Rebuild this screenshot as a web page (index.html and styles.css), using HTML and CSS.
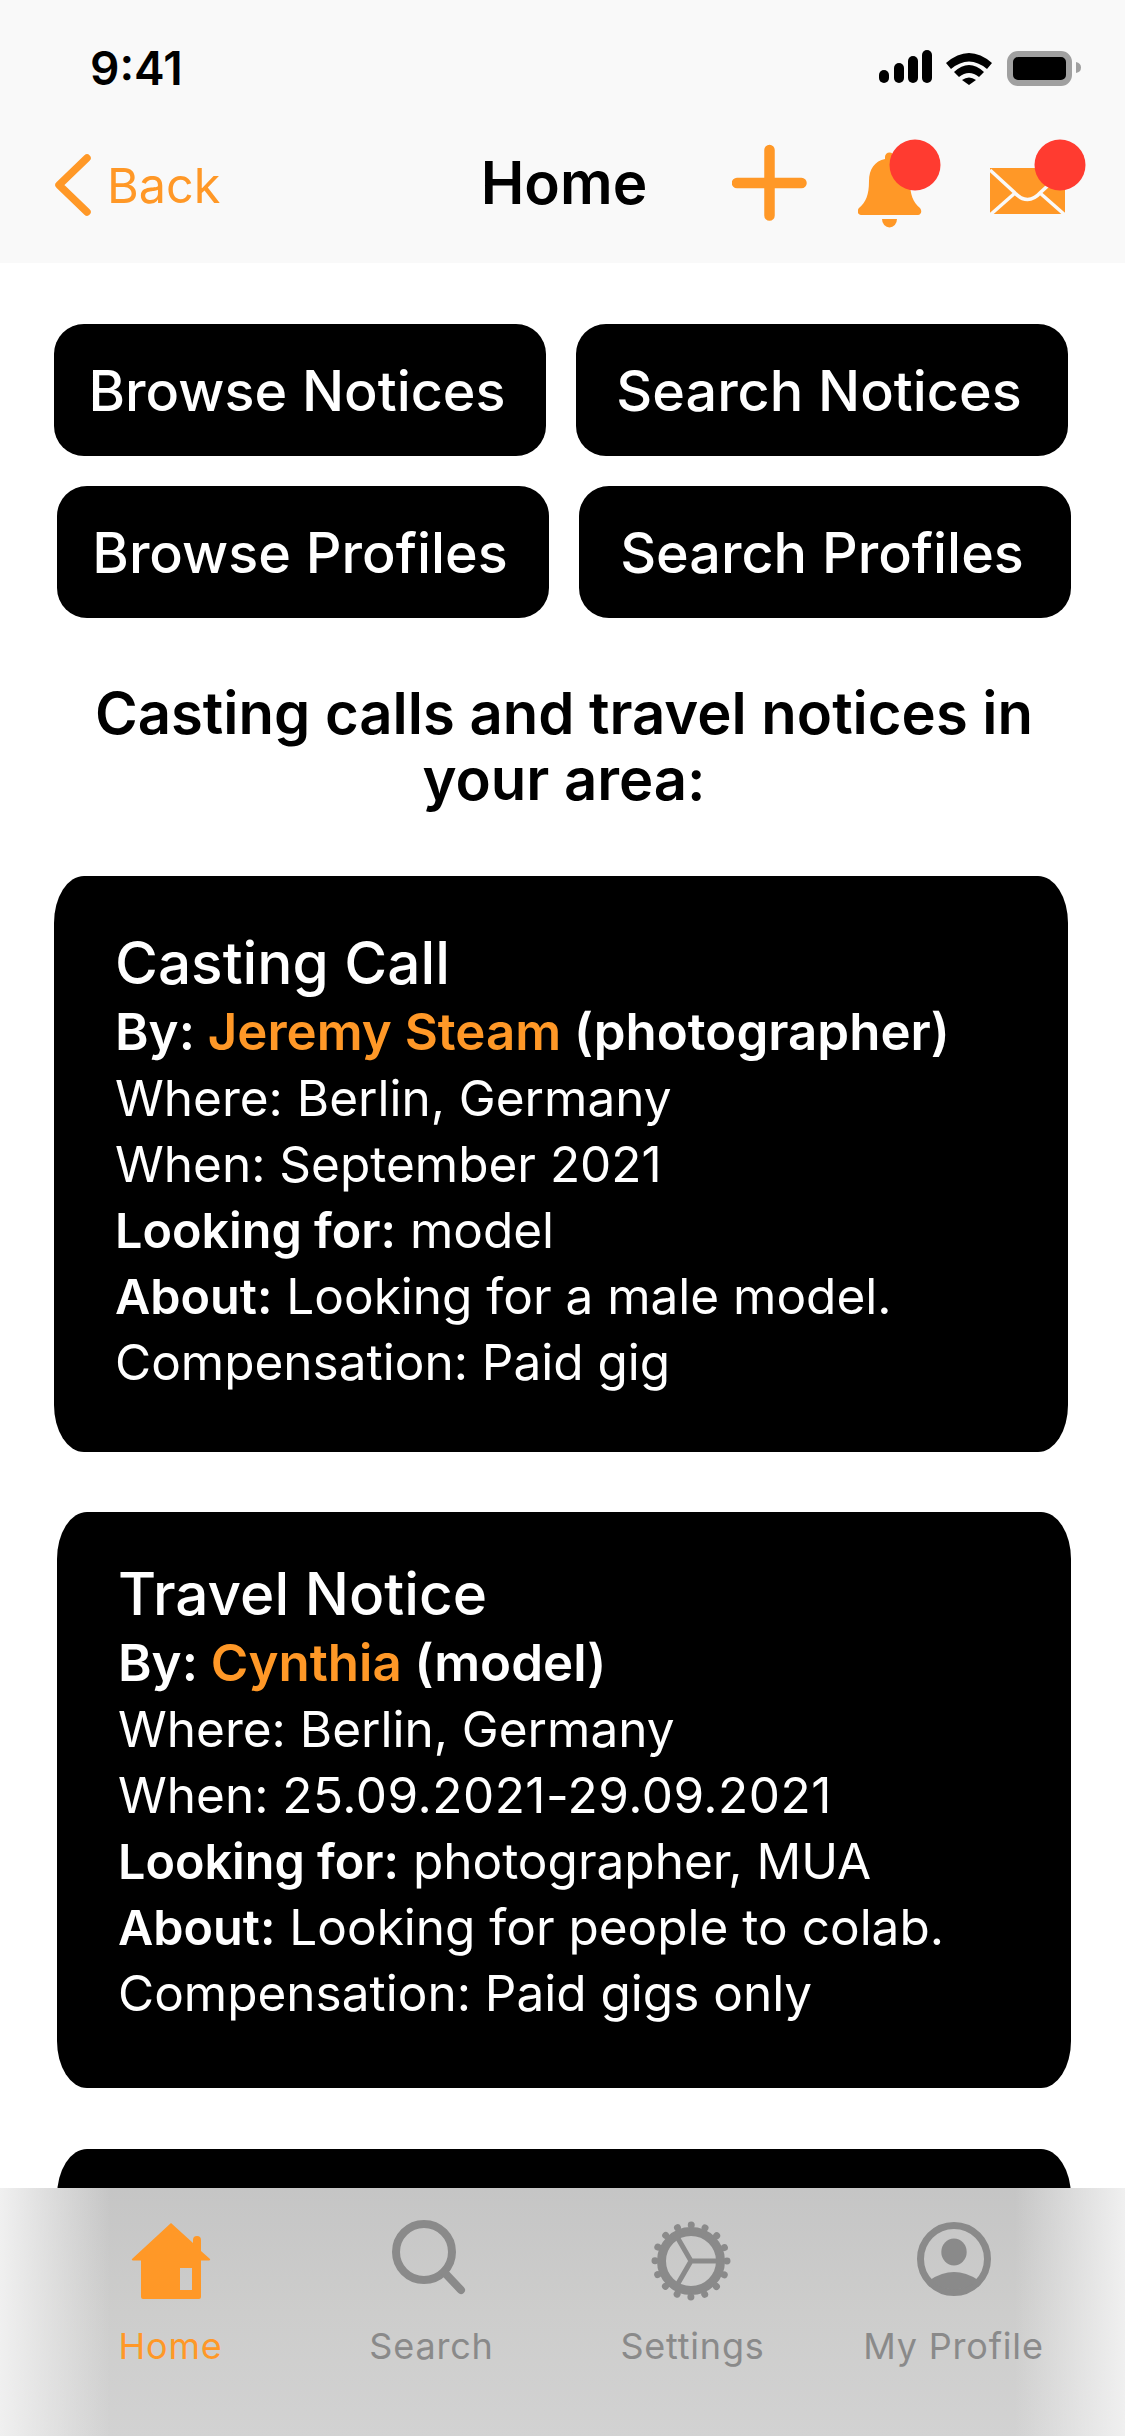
FILE: index.html
```html
<!DOCTYPE html>
<html lang="en">
<head>
    <meta charset="UTF-8">
    <meta name="viewport" content="width=device-width, initial-scale=1.0">
    <title>Home</title>
    <link rel="stylesheet" href="styles.css">
</head>
<body>
    <div class="screen">
        <header class="topbar">
            <div class="status">
                <span class="time">9:41</span>
                <svg class="status-icons" width="203" height="38" viewBox="0 0 203 38">
                    <rect x="0" y="21" width="10" height="13" rx="5"/>
                    <rect x="15" y="14" width="10" height="20" rx="5"/>
                    <rect x="29" y="7" width="10" height="27" rx="5"/>
                    <rect x="43" y="1" width="10" height="33" rx="5"/>
                    <path d="M67 14 Q90 -6 113 14 L108 20 Q90 5 72 20 Z"/>
                    <path d="M75 23 Q90 9 105 23 L100 28 Q90 20 80 28 Z"/>
                    <path d="M83 31 Q90 26 97 31 L90 36 Z"/>
                    <rect x="131" y="5" width="59" height="29" rx="8" fill="#000" stroke="#a0a0a0" stroke-width="6"/>
                    <path d="M197 13 Q202 14 202 18.500 Q202 23 197 24 Z" fill="#a0a0a0"/>
                </svg>
            </div>
            <nav class="navbar">
                <a class="back">
                    <svg width="44" height="70" viewBox="0 0 44 70">
                        <path d="M38 8 L10 35 L38 62" fill="none" stroke="#ff9827" stroke-width="7.500" stroke-linecap="round" stroke-linejoin="round"/>
                    </svg>
                    <span>Back</span>
                </a>
                <h1 class="nav-title">Home</h1>
                <div class="nav-actions">
                    <svg width="77" height="90" viewBox="0 0 77 90">
                        <path d="M37.500 11 V76.500 M5 44 H69.500" fill="none" stroke="#ff9827" stroke-width="10.500" stroke-linecap="round"/>
                    </svg>
                    <svg width="83" height="90" viewBox="0 0 83 90">
                        <path fill="#ff9827" d="M27 20 V18 a4.500 4.500 0 0 1 9 0 V20 C46 22 52 30 52 42 C52 56 55 63 62 69 C64.500 72 63 76 60 76 H3 C0 76 -1.500 72 1 69 C8 63 11 56 11 42 C11 30 17 22 27 20 Z"/>
                        <path fill="#ff9827" d="M24 80 H39 a7.500 8.500 0 0 1 -15 0 Z"/>
                        <circle cx="57" cy="26" r="25.500" fill="#ff3b30"/>
                    </svg>
                    <svg width="96" height="90" viewBox="0 0 96 90">
                        <rect x="0" y="29" width="75" height="46" fill="#ff9827"/>
                        <path d="M0 31 L24 53 Q37.500 68 51 53 L75 31 M0 76 L25 54 M50 54 L75 76" fill="none" stroke="#f9f9f9" stroke-width="3.500"/>
                        <circle cx="70" cy="26" r="25.500" fill="#ff3b30"/>
                    </svg>
                </div>
            </nav>
        </header>

        <main class="content">
            <div class="button-row">
                <a class="action-btn">Browse Notices</a>
                <a class="action-btn">Search Notices</a>
            </div>
            <div class="button-row shifted">
                <a class="action-btn">Browse Profiles</a>
                <a class="action-btn">Search Profiles</a>
            </div>

            <h2 class="section-title">Casting calls and travel notices in your area:</h2>

            <article class="card">
                <h3 class="card-title">Casting Call</h3>
                <p class="strong">By: <span class="accent">Jeremy Steam</span> (photographer)</p>
                <p>Where: Berlin, Germany</p>
                <p>When: September 2021</p>
                <p><b>Looking for:</b> model</p>
                <p><b>About:</b> Looking for a male model.</p>
                <p>Compensation: Paid gig</p>
            </article>

            <article class="card shifted">
                <h3 class="card-title">Travel Notice</h3>
                <p class="strong">By: <span class="accent">Cynthia</span> (model)</p>
                <p>Where: Berlin, Germany</p>
                <p>When: <span class="dates">25.09.2021-29.09.2021</span></p>
                <p><b>Looking for:</b> photographer, MUA</p>
                <p><b>About:</b> Looking for people to colab.</p>
                <p>Compensation: Paid gigs only</p>
            </article>

            <article class="card shifted card-next"></article>
        </main>

        <footer class="tabbar">
            <a class="tab active">
                <svg width="100" height="90" viewBox="0 0 100 90">
                    <path fill="#ff9827" fill-rule="evenodd" d="M50 9 L72 29 V26 a4 4 0 0 1 8 0 V37 L89 45 a1 1 0 0 1 -1 1.500 H80 V83 a2 2 0 0 1 -2 2 H22 a2 2 0 0 1 -2 -2 V46.500 H12 a1 1 0 0 1 -1 -1.500 Z M59 54 V76 H71 V54 Z"/>
                </svg>
                <span>Home</span>
            </a>
            <a class="tab">
                <svg width="100" height="90" viewBox="0 0 100 90">
                    <circle cx="42" cy="38" r="28" fill="none" stroke="#8a8a8a" stroke-width="8"/>
                    <path d="M62 58 L79 76" fill="none" stroke="#8a8a8a" stroke-width="8" stroke-linecap="round"/>
                </svg>
                <span>Search</span>
            </a>
            <a class="tab">
                <svg width="100" height="90" viewBox="0 0 100 90">
                    <circle cx="48" cy="47" r="29.500" fill="none" stroke="#8a8a8a" stroke-width="9"/>
                    <circle cx="48" cy="47" r="36" fill="none" stroke="#8a8a8a" stroke-width="7" stroke-linecap="round" stroke-dasharray="0.01 14.127"/>
                    <path d="M48 47 H74 M48 47 L35 24.500 M48 47 L35 69.500" fill="none" stroke="#8a8a8a" stroke-width="5"/>
                </svg>
                <span>Settings</span>
            </a>
            <a class="tab">
                <svg width="100" height="90" viewBox="0 0 100 90">
                    <circle cx="50" cy="45" r="33.500" fill="none" stroke="#8a8a8a" stroke-width="7"/>
                    <ellipse cx="50" cy="38" rx="12.700" ry="13.500" fill="#8a8a8a"/>
                    <path fill="#8a8a8a" d="M26 66 Q38 58 50 58 Q62 58 74 66 A35 35 0 0 1 26 66 Z"/>
                </svg>
                <span>My Profile</span>
            </a>
        </footer>
    </div>
</body>
</html>
```

FILE: styles.css
```css
* {
    box-sizing: border-box;
}

body {
    margin: 0;
    font-family: Inter, "Noto Sans", sans-serif;
    background-color: #fff;
    color: #000;
}

svg {
    display: block;
}

.screen {
    position: relative;
    width: 1125px;
    height: 2436px;
    overflow: hidden;
}

.topbar {
    background-color: #f9f9f9;
}

.status {
    display: flex;
    align-items: center;
    justify-content: space-between;
    height: 100px;
    padding: 36px 43px 0 90px;
}

.time {
    font-size: 46px;
    font-weight: 600;
}

.navbar {
    display: grid;
    grid-template-columns: 1fr auto 1fr;
    align-items: center;
    height: 163px;
    padding: 0 39px 0 42px;
}

.back {
    display: flex;
    align-items: center;
    gap: 14px;
    margin-left: 7px;
    padding-top: 7px;
    font-size: 48.5px;
    color: #ff9827;
}

.nav-title {
    margin: 0;
    padding-top: 1px;
    font-size: 58.5px;
    font-weight: 600;
}

.nav-actions {
    display: flex;
    justify-content: flex-end;
    gap: 49px;
    padding-top: 4px;
}

.content {
    padding-top: 61px;
}

.button-row {
    display: grid;
    grid-template-columns: 492px 492px;
    gap: 30px;
    margin: 0 0 30px 54px;
}

.button-row.shifted {
    margin-left: 57px;
}

.action-btn {
    display: flex;
    align-items: center;
    justify-content: center;
    height: 132px;
    padding-right: 6px;
    border-radius: 30px;
    background-color: #000;
    color: #fff;
    font-size: 55.7px;
    font-weight: 500;
}

.section-title {
    width: 1000px;
    margin: 62px 0 64px 64px;
    font-size: 58px;
    font-weight: 600;
    line-height: 66px;
    text-align: center;
}

.card {
    width: 1014px;
    height: 576px;
    margin: 0 0 60px 54px;
    padding: 54px 62px 0 61px;
    border-radius: 30px / 47px;
    background-color: #000;
    color: #fff;
    font-size: 49.5px;
    line-height: 66px;
}

.card.shifted {
    margin-left: 57px;
    padding-top: 48.5px;
    padding-left: 61px;
}

.card-title {
    margin: 0 0 3px;
    font-size: 58.5px;
    font-weight: 500;
    line-height: 66px;
}

.card p {
    margin: 0;
}

.card b,
.card .strong {
    font-weight: 600;
}

.card b {
    font-size: 48.5px;
    line-height: 0;
}

.card .strong {
    font-size: 51px;
}

.dates {
    letter-spacing: 0.5px;
}

.accent {
    color: #ff9827;
}

.card-next {
    margin-top: 61px;
}

/* sits over the list, the third card runs under it */
.tabbar {
    position: absolute;
    left: 0;
    right: 0;
    bottom: 0;
    height: 248px;
    display: grid;
    grid-template-columns: repeat(4, 261px);
    padding: 26px 0 0 40px;
    background:
        linear-gradient(90deg, #f0f0f0 0, rgba(240, 240, 240, 0) 110px, rgba(240, 240, 240, 0) 1015px, #f0f0f0 100%),
        linear-gradient(180deg, #c5c5c5 0, #cdcdcc 50%, #d2d2d2 100%);
}

.tab {
    display: flex;
    flex-direction: column;
    align-items: center;
    gap: 19.5px;
    font-size: 36px;
    letter-spacing: 0.8px;
    color: #8a8a8a;
}

.tab.active {
    color: #ff9827;
}
```
